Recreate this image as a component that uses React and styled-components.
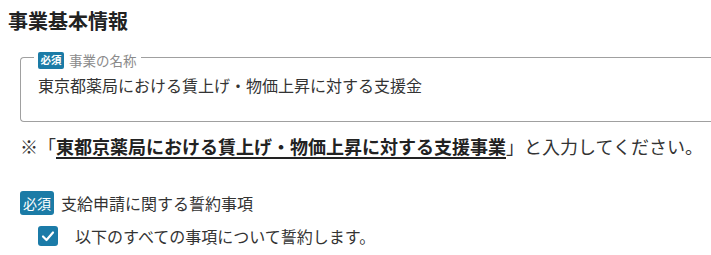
import React from 'react';
import styled, { createGlobalStyle } from 'styled-components';

const GlobalStyle = createGlobalStyle`
  html, body {
    margin: 0;
    padding: 0;
    background: #fff;
    overflow: hidden;
  }
  body {
    font-family: "Noto Sans CJK JP", "Noto Sans", sans-serif;
    color: #333;
  }
`;

const Page = styled.div`
  width: 711px;
  height: 255px;
  overflow: hidden;
`;

const Title = styled.h2`
  margin: 7px 0 0;
  padding-left: 8px;
  font-size: 20px;
  line-height: 28px;
  font-weight: 700;
  color: #222;
`;

const Body = styled.div`
  padding-left: 20px;
`;

const Field = styled.fieldset`
  margin: 10px 0 0;
  border: 1px solid #a0a0a0;
  border-right: 0;
  border-radius: 4px 0 0 4px;
  padding: 4px 17px 24px;
`;

const Legend = styled.legend`
  display: flex;
  align-items: center;
  gap: 5px;
  margin-left: -4px;
  padding: 7px 4px 0;
  line-height: 17px;
`;

const Badge = styled.span`
  display: inline-flex;
  align-items: center;
  justify-content: center;
  background: #1b7ba6;
  color: #fff;
  border-radius: ${({ $large }) => ($large ? '3px' : '2px')};
  font-size: ${({ $large }) => ($large ? '14px' : '10.5px')};
  font-weight: ${({ $large }) => ($large ? 400 : 700)};
  height: ${({ $large }) => ($large ? '24px' : '17px')};
  padding: 0 ${({ $large }) => ($large ? '3px' : '2.5px')};
  line-height: 1;
  flex-shrink: 0;
`;

const LegendText = styled.span`
  font-size: 13.5px;
  color: #8a8a8a;
`;

const Value = styled.div`
  font-size: 16px;
  line-height: 24px;
  color: #333;
`;

const Note = styled.p`
  margin: 11px 0 0;
  font-size: 18px;
  line-height: 27px;
  color: #333;
  white-space: nowrap;
`;

const Strong = styled.strong`
  font-weight: 700;
  color: #222;
  text-decoration: underline;
  text-underline-offset: 3px;
  text-decoration-thickness: 2px;
`;

const Group = styled.div`
  margin-top: 31px;
`;

const GroupHead = styled.div`
  display: flex;
  align-items: center;
  gap: 7px;
  font-size: 16px;
  line-height: 24px;
  color: #333;
`;

const CheckRow = styled.label`
  display: flex;
  align-items: center;
  gap: 17px;
  margin: 9px 0 0 18px;
  font-size: 16px;
  line-height: 24px;
  color: #333;
`;

const Box = styled.span`
  width: 20px;
  height: 20px;
  border-radius: 3px;
  background: #1b7ba8;
  display: inline-flex;
  align-items: center;
  justify-content: center;
  flex-shrink: 0;
`;

const Check = () => (
  <Box>
    <svg width="14" height="14" viewBox="0 0 14 14" fill="none">
      <path d="M2 7.5 L5.5 11 L12 3.5" stroke="#fff" strokeWidth="2.2" strokeLinecap="round" strokeLinejoin="round" />
    </svg>
  </Box>
);

export default function App() {
  return (
    <Page>
      <GlobalStyle />
      <Title>事業基本情報</Title>
      <Body>
        <Field>
          <Legend>
            <Badge>必須</Badge>
            <LegendText>事業の名称</LegendText>
          </Legend>
          <Value>東京都薬局における賃上げ・物価上昇に対する支援金</Value>
        </Field>
        <Note>
          ※「<Strong>東都京薬局における賃上げ・物価上昇に対する支援事業</Strong>」と入力してください。
        </Note>
        <Group>
          <GroupHead>
            <Badge $large>必須</Badge>
            支給申請に関する誓約事項
          </GroupHead>
          <CheckRow>
            <Check />
            以下のすべての事項について誓約します。
          </CheckRow>
        </Group>
      </Body>
    </Page>
  );
}
